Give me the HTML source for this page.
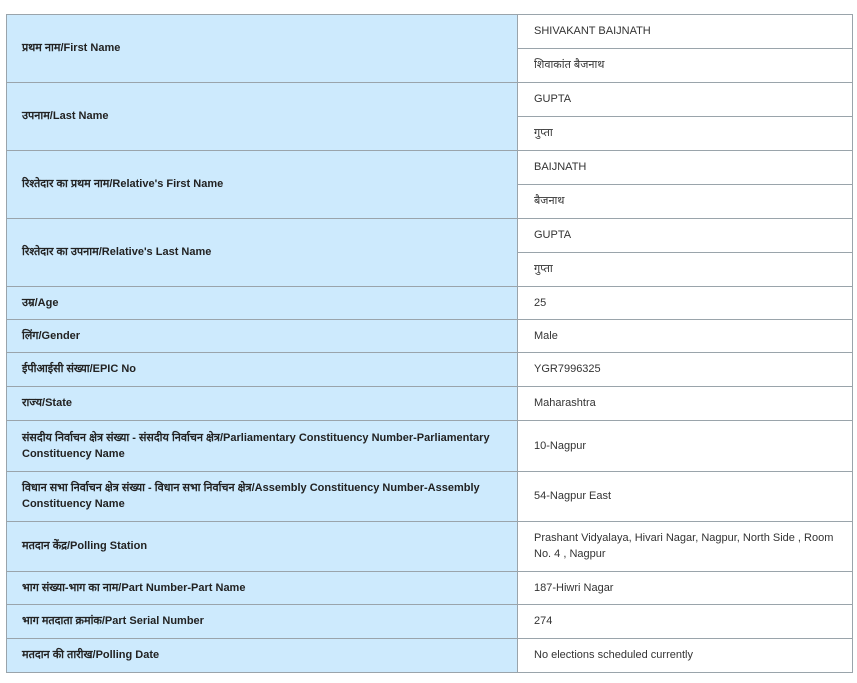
<!DOCTYPE html>
<html><head><meta charset="utf-8"><style>
body{margin:0;width:857px;height:683px;background:#fff;position:relative;overflow:hidden;font-family:"Liberation Sans","Noto Sans CJK SC",sans-serif;font-size:11px;}
.l{position:absolute;left:6px;width:511px;background:#cdeafd;color:#222;font-weight:bold;display:flex;align-items:center;box-sizing:border-box;padding:0 16px;line-height:16px;}
.r{position:absolute;left:517px;width:335px;color:#333;display:flex;align-items:center;box-sizing:border-box;padding:0 17px;line-height:16px;}
.h{position:absolute;left:6px;width:847px;height:1px;background:#9aa4ab;}
.hr{position:absolute;left:517px;width:336px;height:1px;background:#9aa4ab;}
.v{position:absolute;top:14px;height:659px;width:1px;background:#9aa4ab;}
</style></head><body>
<div class="l" style="top:14px;height:68px">प्रथम नाम/First Name</div>
<div class="r" style="top:14px;height:34px">SHIVAKANT BAIJNATH</div>
<div class="r" style="top:48px;height:34px">शिवाकांत बैजनाथ</div>
<div class="l" style="top:82px;height:68px">उपनाम/Last Name</div>
<div class="r" style="top:82px;height:34px">GUPTA</div>
<div class="r" style="top:116px;height:34px">गुप्ता</div>
<div class="l" style="top:150px;height:68px">रिश्तेदार का प्रथम नाम/Relative's First Name</div>
<div class="r" style="top:150px;height:34px">BAIJNATH</div>
<div class="r" style="top:184px;height:34px">बैजनाथ</div>
<div class="l" style="top:218px;height:68px">रिश्तेदार का उपनाम/Relative's Last Name</div>
<div class="r" style="top:218px;height:34px">GUPTA</div>
<div class="r" style="top:252px;height:34px">गुप्ता</div>
<div class="l" style="top:286px;height:33px">उम्र/Age</div><div class="r" style="top:286px;height:33px">25</div>
<div class="l" style="top:319px;height:33px">लिंग/Gender</div><div class="r" style="top:319px;height:33px">Male</div>
<div class="l" style="top:352px;height:34px">ईपीआईसी संख्या/EPIC No</div><div class="r" style="top:352px;height:34px">YGR7996325</div>
<div class="l" style="top:386px;height:34px">राज्य/State</div><div class="r" style="top:386px;height:34px">Maharashtra</div>
<div class="l" style="top:420px;height:51px">संसदीय निर्वाचन क्षेत्र संख्या - संसदीय निर्वाचन क्षेत्र/Parliamentary Constituency Number-Parliamentary Constituency Name</div><div class="r" style="top:420px;height:51px">10-Nagpur</div>
<div class="l" style="top:471px;height:50px">विधान सभा निर्वाचन क्षेत्र संख्या - विधान सभा निर्वाचन क्षेत्र/Assembly Constituency Number-Assembly Constituency Name</div><div class="r" style="top:471px;height:50px">54-Nagpur East</div>
<div class="l" style="top:521px;height:50px">मतदान केंद्र/Polling Station</div><div class="r" style="top:521px;height:50px">Prashant Vidyalaya, Hivari Nagar, Nagpur, North Side , Room No. 4 , Nagpur</div>
<div class="l" style="top:571px;height:33px">भाग संख्या-भाग का नाम/Part Number-Part Name</div><div class="r" style="top:571px;height:33px">187-Hiwri Nagar</div>
<div class="l" style="top:604px;height:34px">भाग मतदाता क्रमांक/Part Serial Number</div><div class="r" style="top:604px;height:34px">274</div>
<div class="l" style="top:638px;height:34px">मतदान की तारीख/Polling Date</div><div class="r" style="top:638px;height:34px">No elections scheduled currently</div>
<div class="h" style="top:14px"></div>
<div class="hr" style="top:48px"></div>
<div class="h" style="top:82px"></div>
<div class="hr" style="top:116px"></div>
<div class="h" style="top:150px"></div>
<div class="hr" style="top:184px"></div>
<div class="h" style="top:218px"></div>
<div class="hr" style="top:252px"></div>
<div class="h" style="top:286px"></div>
<div class="h" style="top:319px"></div>
<div class="h" style="top:352px"></div>
<div class="h" style="top:386px"></div>
<div class="h" style="top:420px"></div>
<div class="h" style="top:471px"></div>
<div class="h" style="top:521px"></div>
<div class="h" style="top:571px"></div>
<div class="h" style="top:604px"></div>
<div class="h" style="top:638px"></div>
<div class="h" style="top:672px"></div>
<div class="v" style="left:6px"></div>
<div class="v" style="left:517px"></div>
<div class="v" style="left:852px"></div>
</body></html>
